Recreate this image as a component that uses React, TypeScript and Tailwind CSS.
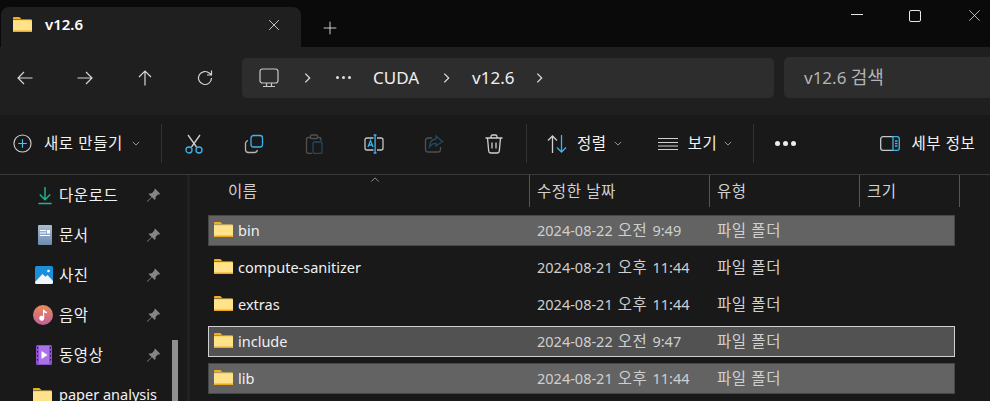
import type { ReactNode } from "react";

const FONT = "font-['Noto_Sans','Noto_Sans_CJK_KR',sans-serif]";
const KO = "text-[15.5px] tracking-[0.6px] whitespace-nowrap pt-[1px]";
const BLUE = "#3fb2ee";

function Folder({ className }: { className: string }) {
  return (
    <svg viewBox="0 0 19 15" className={className}>
      <path d="M0 1.2C0 .5.5 0 1.2 0h4.600c.4 0 .7.1 1 .4L8.400 2H0z" fill="#f2ae1c" />
      <path d="M0 2.500h17.800c.7 0 1.200.5 1.200 1.200v10c0 .7-.5 1.300-1.200 1.300H1.200C.5 15 0 14.400 0 13.700z" fill="#fcd862" />
      <path d="M0 4h19v9.800c0 .7-.5 1.200-1.200 1.200H1.200C.5 15 0 14.500 0 13.800z" fill="#ffe28a" />
      <path d="M0 13.600h19v.2c0 .7-.5 1.200-1.200 1.200H1.200C.5 15 0 14.500 0 13.800z" fill="#eba91c" />
    </svg>
  );
}

function Line({ d, className = "w-5 h-5", color = "#d6d6d6" }: { d: string; className?: string; color?: string }) {
  return (
    <svg viewBox="0 0 20 20" className={className} fill="none" stroke={color} strokeWidth="1.2">
      <path d={d} />
    </svg>
  );
}

function Chevron() {
  return (
    <svg viewBox="0 0 10 6" className="w-[8px] h-[5px]" fill="none" stroke="#b5b5b5" strokeWidth="1">
      <path d="M1 1l4 4 4-4" />
    </svg>
  );
}

function Crumb() {
  return (
    <svg viewBox="0 0 8 12" className="w-[7px] h-[12px]" fill="none" stroke="#e0e0e0" strokeWidth="1.4">
      <path d="M1.500 1l5 5-5 5" />
    </svg>
  );
}

function ToolButton({ children }: { children: ReactNode }) {
  return <div className="w-[60px] flex justify-center">{children}</div>;
}

function Separator() {
  return <div className="w-px h-[39px] bg-[#333333]" />;
}

function Pin() {
  return (
    <svg viewBox="0 0 14 14" className="w-[15px] h-[15px] ml-auto mr-[26px]" fill="#858585">
      <path d="M8.600.8l4.600 4.600-1 .8-.8-.3-2.500 2.400c.3 1.200 0 2.200-.7 3L5.500 8.600 1.500 12.800.9 12.300l4.200-4-2.700-2.700c.8-.7 1.800-1 3-.7l2.400-2.500-.2-.8z" />
    </svg>
  );
}

function SideItem({ icon, label }: { icon: ReactNode; label: string }) {
  const latin = label === "paper analysis";
  return (
    <div className="flex items-center h-[40px] shrink-0 text-[#f2f2f2]">
      <div className="w-[59px] flex justify-end pr-[7px]">{icon}</div>
      <span className={latin ? "text-[14.5px] whitespace-nowrap" : KO}>{label}</span>
      {!latin && <Pin />}
    </div>
  );
}

type Row = { name: string; day: string; half: string; time: string; selected?: boolean; focused?: boolean };

const rows: Row[] = [
  { name: "bin", day: "2024-08-22", half: "오전", time: "9:49", selected: true },
  { name: "compute-sanitizer", day: "2024-08-21", half: "오후", time: "11:44" },
  { name: "extras", day: "2024-08-21", half: "오후", time: "11:44" },
  { name: "include", day: "2024-08-22", half: "오전", time: "9:47", focused: true },
  { name: "lib", day: "2024-08-21", half: "오후", time: "11:44", selected: true },
];

function FileRow({ row }: { row: Row }) {
  const tone = row.focused
    ? "bg-[#525252] border-[#cfcfcf]"
    : row.selected
      ? "bg-[#636363] border-[#474747]"
      : "bg-transparent border-transparent";
  return (
    <div className={`grid grid-cols-[328px_180px_1fr] items-center h-[31px] w-[747px] border ${tone}`}>
      <div className="flex items-center pl-[5px]">
        <Folder className="w-[19px] h-[15px] mb-[2px]" />
        <span className="ml-[5px] text-[14.5px] text-[#f0f0f0]">{row.name}</span>
      </div>
      <span className="flex items-center text-[14.5px] text-[#cfcfcf] whitespace-nowrap">
        {row.day}
        <span className={`ml-[5px] ${KO}`}>{row.half}</span>
        <span className="ml-[5px]">{row.time}</span>
      </span>
      <span className={`${KO} text-[#cfcfcf]`}>파일 폴더</span>
    </div>
  );
}

export default function App() {
  return (
    <div className={`w-[990px] h-[401px] overflow-hidden flex flex-col bg-[#191919] ${FONT}`}>
      {/* title bar */}
      <div className="h-[47px] shrink-0 bg-[#0a0a0a] flex items-end relative">
        <div className="ml-px w-[300px] h-[40px] bg-[#1f1f1f] rounded-t-[8px] flex items-center pl-[12px] pr-[20px] pb-[5px]">
          <Folder className="w-[19px] h-[15px]" />
          <span className="ml-[13px] text-[15px] font-semibold text-white">v12.6</span>
          <Line className="w-[14px] h-[14px] ml-auto" d="M3 3l14 14M17 3L3 17" color="#e0e0e0" />
        </div>
        <div className="ml-[22px] mb-[12px]">
          <Line className="w-[14px] h-[14px]" d="M10 1v18M1 10h18" color="#f0f0f0" />
        </div>
        <div className="absolute top-[9px] right-[9px] flex items-center">
          <div className="w-[12px] h-px bg-[#e6e6e6] mb-[2px]" />
          <div className="ml-[46px] w-[12px] h-[12px] border border-[#e6e6e6] rounded-[2px]" />
          <div className="ml-[47px]">
            <Line className="w-[13px] h-[13px]" d="M2 2l16 16M18 2L2 18" color="#e6e6e6" />
          </div>
        </div>
      </div>

      {/* nav bar */}
      <div className="h-[68px] shrink-0 bg-[#1f1f1f] flex items-center pl-[15px] pb-[7px]">
        <div className="flex items-center gap-[40px]">
          <Line d="M17.500 10H3M9 4l-6 6 6 6" />
          <Line d="M2.500 10H17M11 4l6 6-6 6" />
          <Line d="M10 17.500V3M4 9l6-6 6 6" />
          <Line d="M16.500 10a6.500 6.500 0 1 1-2-4.700L16.500 7M16.500 2.500V7H12" />
        </div>
        <div className="ml-[27px] w-[532px] h-[40px] bg-[#2d2d2d] rounded-[5px] flex items-center pl-[17px]">
          <svg viewBox="0 0 20 20" className="w-[20px] h-[20px]" fill="none" stroke="#c8c8c8" strokeWidth="1.2">
            <rect x="1" y="1" width="18" height="14" rx="2.500" />
            <path d="M7.500 15v3M12.500 15v3M4 18.500h12" />
          </svg>
          <div className="ml-[25px]"><Crumb /></div>
          <div className="ml-[25px] flex gap-[3px]">
            <div className="w-[3px] h-[3px] rounded-full bg-[#e0e0e0]" />
            <div className="w-[3px] h-[3px] rounded-full bg-[#e0e0e0]" />
            <div className="w-[3px] h-[3px] rounded-full bg-[#e0e0e0]" />
          </div>
          <span className="ml-[22px] text-[17px] text-[#f0f0f0]">CUDA</span>
          <div className="ml-[24px]"><Crumb /></div>
          <span className="ml-[22px] text-[17px] text-[#f0f0f0]">v12.6</span>
          <div className="ml-[22px]"><Crumb /></div>
        </div>
        <div className="ml-[10px] flex-1 h-[41px] bg-[#2d2d2d] rounded-l-[5px] flex items-center pl-[20px]">
          <span className="text-[17px] text-[#b4b4b4] whitespace-nowrap">
            v12.6 <span className="text-[18px]">검색</span>
          </span>
        </div>
      </div>

      {/* command bar */}
      <div className="h-[60px] shrink-0 flex items-center pb-[2px] border-b border-[#3a3a3a] text-[#f2f2f2]">
        <svg viewBox="0 0 20 20" className="ml-[13px] w-[19px] h-[19px]" fill="none" strokeWidth="1.200">
          <circle cx="10" cy="10" r="9" stroke="#cfcfcf" />
          <path d="M10 5.500v9M5.500 10h9" stroke="#4cc2ff" />
        </svg>
        <span className={`ml-[12px] ${KO}`}>새로 만들기</span>
        <div className="ml-[9px]"><Chevron /></div>
        <div className="ml-[21px]"><Separator /></div>
        <div className="-ml-px flex items-center pl-[3px]">
          <ToolButton>
            <svg viewBox="0 0 20 20" className="w-5 h-5" fill="none" strokeWidth="1.300">
              <path d="M4 1l8.500 12M16 1L7.500 13" stroke="#cfcfcf" />
              <circle cx="5" cy="16" r="3" stroke={BLUE} />
              <circle cx="15" cy="16" r="3" stroke={BLUE} />
            </svg>
          </ToolButton>
          <ToolButton>
            <svg viewBox="0 0 20 20" className="w-5 h-5" fill="none" strokeWidth="1.300">
              <path d="M4 6.500C2.500 7 1.500 8 1.500 9.500v6c0 1.700 1.300 3 3 3h6c1.500 0 2.500-1 3-2.500" stroke="#b5b5b5" />
              <rect x="7" y="1.500" width="11.500" height="11.500" rx="2.500" stroke={BLUE} />
            </svg>
          </ToolButton>
          <ToolButton>
            <svg viewBox="0 0 20 20" className="w-5 h-5" fill="none" strokeWidth="1.300">
              <path d="M7 3.500H4.500c-1.200 0-2 .8-2 2v12c0 1 .8 1.800 2 1.800H8M13 3.500h2.500c1 0 1.500.6 1.500 1.500v2" stroke="#505050" />
              <rect x="6.500" y="1" width="7" height="3.500" rx="1" stroke="#505050" />
              <rect x="9" y="8" width="9" height="11.500" rx="1.500" stroke="#1f4a63" />
            </svg>
          </ToolButton>
          <ToolButton>
            <svg viewBox="0 0 20 20" className="w-5 h-5" fill="none" strokeWidth="1.300">
              <path d="M9.500 4H3c-1.200 0-2 .8-2 2v8c0 1.200.8 2 2 2h6.500M13 4h4c1.200 0 2 .8 2 2v8c0 1.200-.8 2-2 2h-4" stroke="#c4c4c4" />
              <path d="M9.700 1h2.800M9.700 19h2.800M11.100 1v18M4 13l2.500-6.500L9 13M5 11h3" stroke={BLUE} />
            </svg>
          </ToolButton>
          <ToolButton>
            <svg viewBox="0 0 20 20" className="w-5 h-5" fill="none" strokeWidth="1.300">
              <path d="M8 4H4C2.500 4 1.500 5 1.500 6.500v9c0 1.500 1 2.500 2.500 2.500h10c1.500 0 2.500-1 2.500-2.500V13" stroke="#505050" />
              <path d="M12 2l6.500 5.500L12 12V9.300C9 9.300 7 10.500 5.500 13c0-4.500 2.500-7.500 6.500-8z" stroke="#1f4a63" />
            </svg>
          </ToolButton>
          <ToolButton>
            <svg viewBox="0 0 20 20" className="w-5 h-5" fill="none" stroke="#d0d0d0" strokeWidth="1.300">
              <path d="M1.500 4h17M7 4V2.700C7 1.800 7.700 1 8.500 1h3c.8 0 1.500.8 1.500 1.700V4M3.500 4l1.200 13c.1 1.200 1 2 2 2h6.600c1 0 1.900-.8 2-2L16.500 4M8 8.500v6M12 8.500v6" />
            </svg>
          </ToolButton>
        </div>
        <div className="ml-[2px]"><Separator /></div>
        <svg viewBox="0 0 20 20" className="ml-[20px] w-[20px] h-[20px]" fill="none" strokeWidth="1.300">
          <path d="M5.500 19V2M1 6.500L5.500 2 10 6.500" stroke="#cfcfcf" />
          <path d="M14.500 1v17M10 13.500l4.500 4.500 4.500-4.500" stroke={BLUE} />
        </svg>
        <span className={`ml-[10px] ${KO}`}>정렬</span>
        <div className="ml-[7px]"><Chevron /></div>
        <svg viewBox="0 0 20 14" className="ml-[36px] w-[20px] h-[14px]" fill="none" stroke="#d0d0d0" strokeWidth="1.200">
          <path d="M0 1.500h20M0 5.500h20M0 9h20M0 12.500h20" />
        </svg>
        <span className={`ml-[10px] ${KO}`}>보기</span>
        <div className="ml-[7px]"><Chevron /></div>
        <div className="ml-[21px]"><Separator /></div>
        <div className="ml-[21px] flex gap-[3px]">
          <div className="w-[5px] h-[5px] rounded-full bg-[#ededed]" />
          <div className="w-[5px] h-[5px] rounded-full bg-[#ededed]" />
          <div className="w-[5px] h-[5px] rounded-full bg-[#ededed]" />
        </div>
        <svg viewBox="0 0 20 15" className="ml-[84px] w-[20px] h-[15px]" fill="none" strokeWidth="1.300">
          <path d="M13 .7H3C1.700.7.700 1.700.7 3v9c0 1.300 1 2.300 2.300 2.300h10" stroke="#c8c8c8" />
          <path d="M13 .7h4c1.300 0 2.300 1 2.300 2.300v9c0 1.300-1 2.300-2.300 2.300h-4z" stroke={BLUE} />
          <path d="M15 5h2.500M15 7.500h2.500M15 10h2.500" stroke={BLUE} />
        </svg>
        <span className={`ml-[11px] ${KO}`}>세부 정보</span>
      </div>

      {/* body */}
      <div className="flex-1 min-h-0 flex">
        <aside className="w-[187px] shrink-0 flex flex-col relative">
          <SideItem
            label="다운로드"
            icon={
              <svg viewBox="0 0 14 20" className="w-[14px] h-[19px]" fill="none" stroke="#1fb58f" strokeWidth="1.500">
                <path d="M7 1v13M1.500 9L7 14.500 12.500 9M0 18.500h14" />
              </svg>
            }
          />
          <SideItem
            label="문서"
            icon={
              <svg viewBox="0 0 14 20" className="w-[14px] h-[20px]">
                <defs>
                  <linearGradient id="doc" x1="0" y1="0" x2="0" y2="1">
                    <stop offset="0" stopColor="#a9bcd3" />
                    <stop offset="1" stopColor="#6d8cb0" />
                  </linearGradient>
                </defs>
                <rect width="14" height="20" rx="1" fill="url(#doc)" />
                <path d="M2 5h6v1H2zM2 7.500h6v1H2zM2 10h10v1H2zM9 5h3v3.500H9z" fill="#fff" />
              </svg>
            }
          />
          <SideItem
            label="사진"
            icon={
              <svg viewBox="0 0 18 18" className="w-[18px] h-[18px] -mr-[1px]">
                <rect width="18" height="18" rx="1.500" fill="#1a8fdc" />
                <circle cx="13.500" cy="5" r="1.300" fill="#fff" />
                <path d="M0 16l7.500-8 3 2.800L12.500 9 18 15v1.500c0 .8-.7 1.500-1.500 1.500h-15C.7 18 0 17.300 0 16.500z" fill="#f2f6fb" />
              </svg>
            }
          />
          <SideItem
            label="음악"
            icon={
              <svg viewBox="0 0 20 20" className="w-[20px] h-[20px] -mr-[1px]">
                <defs>
                  <linearGradient id="music" x1="0" y1="0" x2="0" y2="1">
                    <stop offset="0" stopColor="#e88a55" />
                    <stop offset="1" stopColor="#c45f9a" />
                  </linearGradient>
                </defs>
                <circle cx="10" cy="10" r="10" fill="url(#music)" />
                <path d="M10 4.500h1.200c.2 1.500 1.300 2 2.800 2.200v1.500c-1.200 0-2.100-.3-2.800-1v6a2.500 2.500 0 1 1-1.200-2.100z" fill="#fff" />
              </svg>
            }
          />
          <SideItem
            label="동영상"
            icon={
              <svg viewBox="0 0 16 20" className="w-[16px] h-[20px]">
                <rect width="16" height="20" rx="1.500" fill="#8e4fd0" />
                <rect x="3" y="1" width="10" height="18" fill="#a874e6" />
                <path d="M5.500 6l6 4-6 4z" fill="#fff" />
                <path d="M1 2h1v1.500H1zM1 6h1v1.500H1zM1 10h1v1.500H1zM1 14h1v1.500H1zM14 2h1v1.500h-1zM14 6h1v1.500h-1zM14 10h1v1.500h-1zM14 14h1v1.500h-1z" fill="#2a1540" />
              </svg>
            }
          />
          <SideItem label="paper analysis" icon={<Folder className="w-[19px] h-[15px]" />} />
          <div className="absolute top-[165px] bottom-0 right-[9px] w-[6px] bg-[#8f8f8f]" />
        </aside>
        <div className="w-[3px] shrink-0 bg-[#212121]" />
        <main className="flex-1 min-w-0 pl-[18px] relative">
          <div className="h-[32px] grid grid-cols-[301px_180px_150px_101px] text-[#d0d0d0] -ml-[18px] pl-[38px]">
            <div className={`flex items-center ${KO}`}>이름</div>
            <div className={`border-l border-[#555555] pl-[7px] flex items-center ${KO}`}>수정한 날짜</div>
            <div className={`border-l border-[#555555] pl-[7px] flex items-center ${KO}`}>유형</div>
            <div className={`border-x border-[#555555] pl-[7px] flex items-center ${KO}`}>크기</div>
          </div>
          <div className="absolute top-[2px] left-[180px]">
            <svg viewBox="0 0 10 6" className="w-[10px] h-[5px]" fill="none" stroke="#a8a8a8" strokeWidth="1">
              <path d="M.5 5.500L5 1l4.500 4.500" />
            </svg>
          </div>
          <div className="mt-[8px] flex flex-col gap-[6px]">
            {rows.map((row) => (
              <FileRow key={row.name} row={row} />
            ))}
          </div>
        </main>
      </div>
    </div>
  );
}
